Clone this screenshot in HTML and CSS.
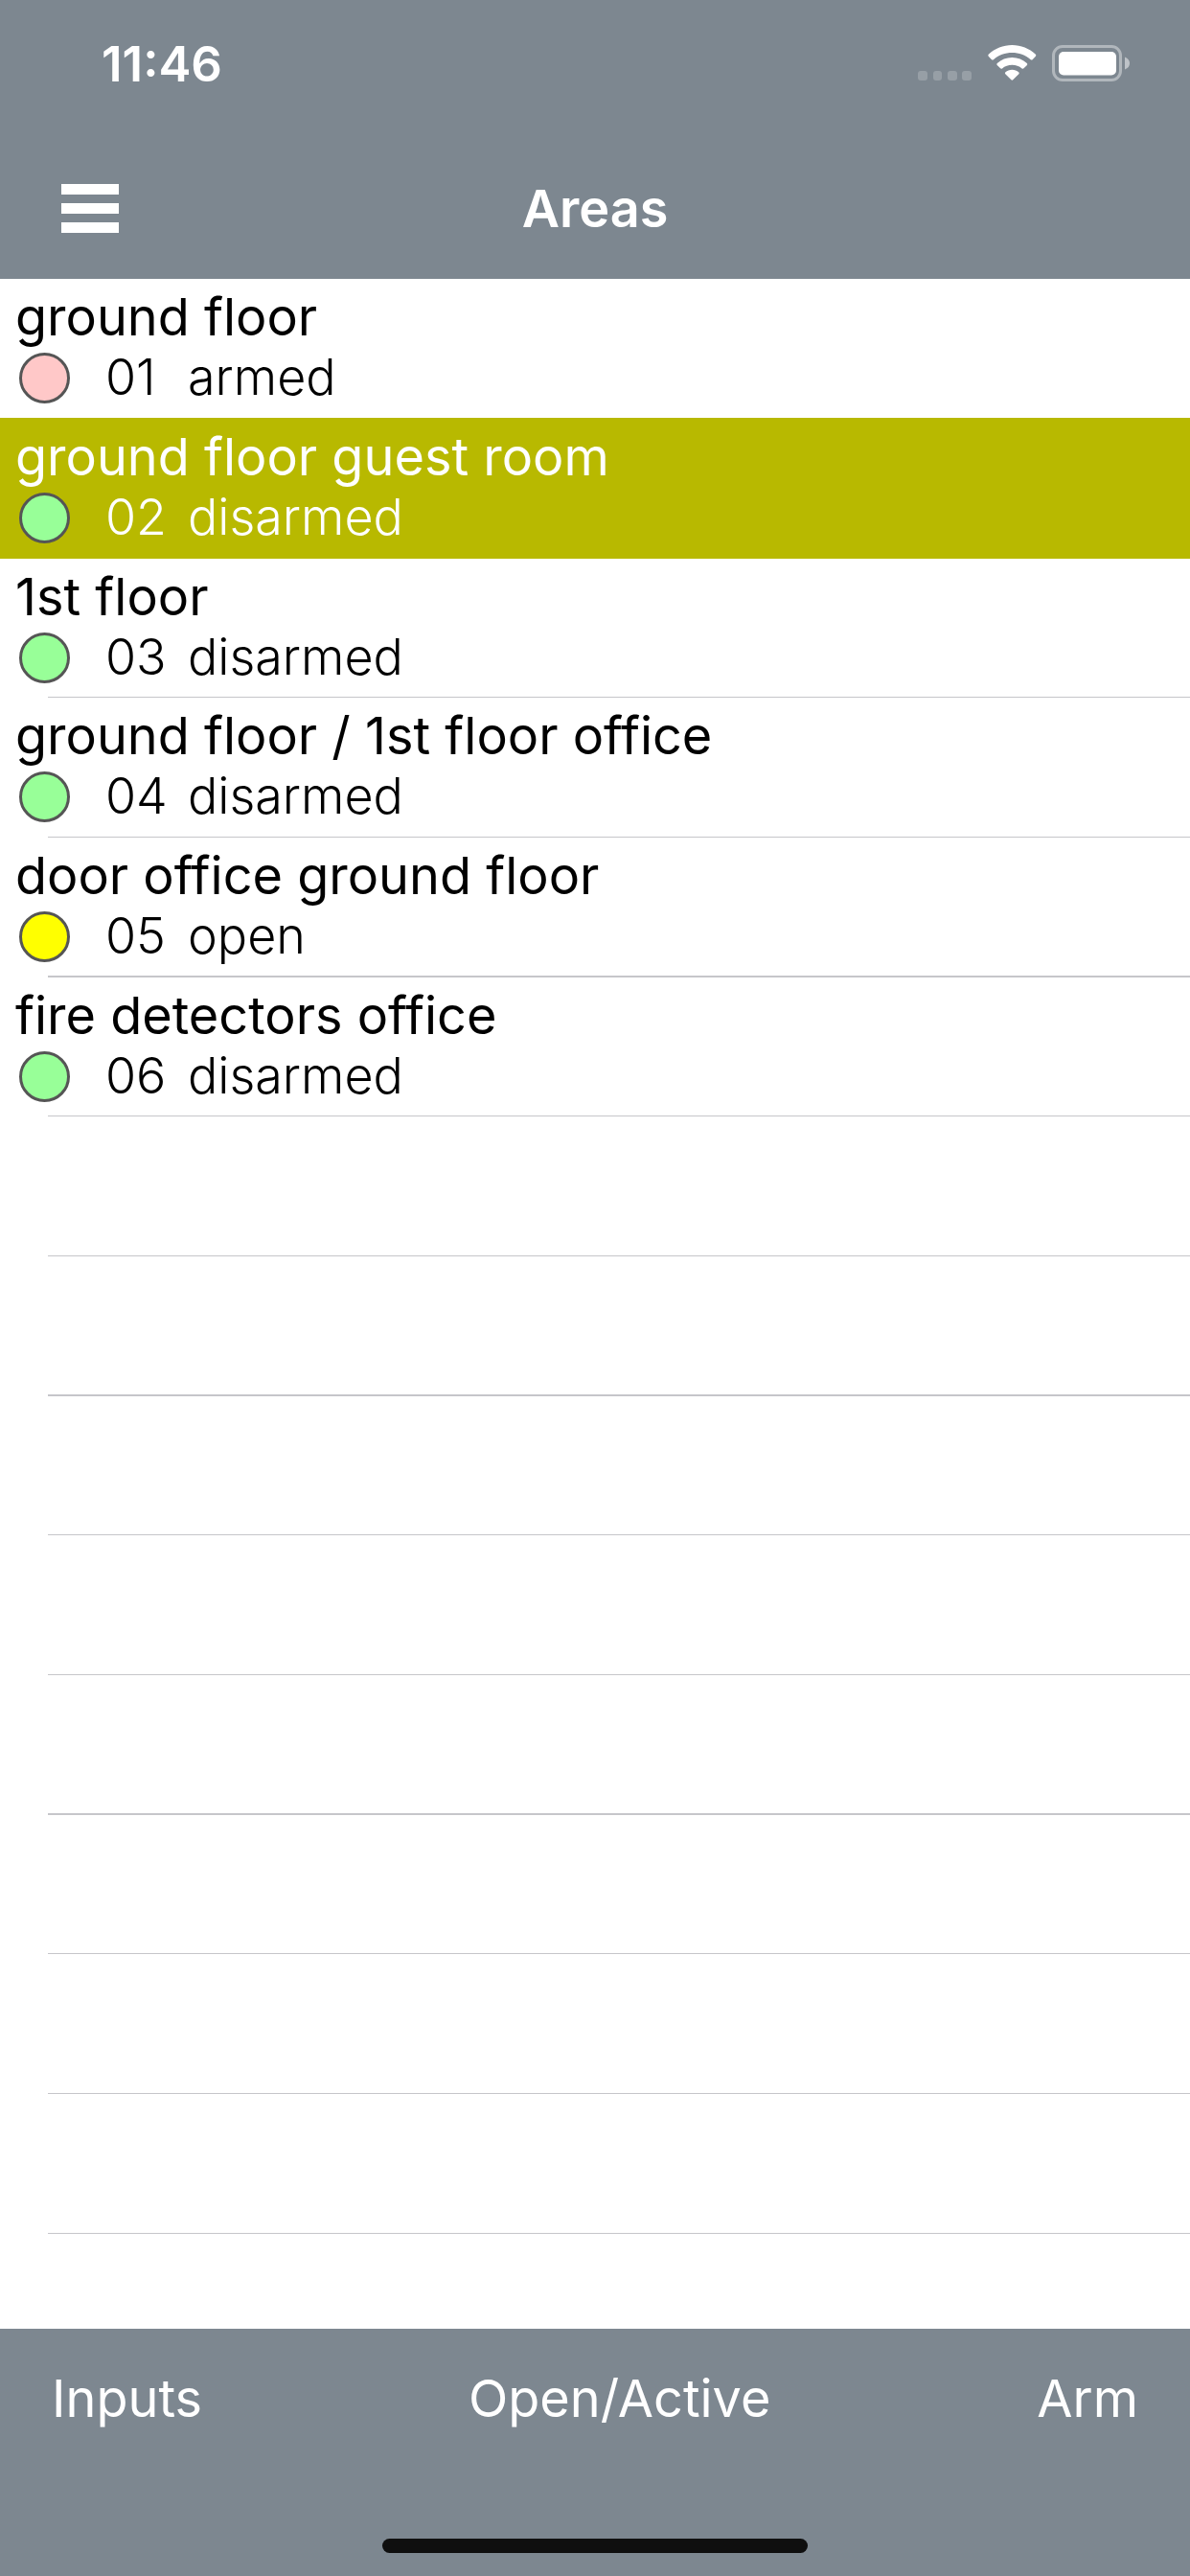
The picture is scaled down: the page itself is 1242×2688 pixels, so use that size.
FILE: index.html
```html
<!DOCTYPE html>
<html lang="en">
<head>
<meta charset="utf-8">
<meta name="viewport" content="width=device-width, initial-scale=1">
<title>Areas</title>
<link rel="stylesheet" href="styles.css">
</head>
<body>
<div class="app">
  <header class="header">
    <div class="status-bar">
      <time class="clock">11:46</time>
      <svg class="status-icons" width="221" height="38" viewBox="0 0 221 38" fill="#fff" aria-hidden="true">
        <g opacity="0.2">
          <rect x="0" y="27" width="10" height="10" rx="3"/>
          <rect x="16" y="27" width="9" height="10" rx="3"/>
          <rect x="31" y="27" width="10" height="10" rx="3"/>
          <rect x="46" y="27" width="10" height="10" rx="3"/>
        </g>
        <path d="M98.300 0C107.500 0 116.200 3.500 122.900 9.800Q123.800 10.800 122.900 11.800L119.600 15.200Q118.700 16 117.700 15.200C112.300 10.500 105.500 8 98.300 8S84.300 10.500 78.900 15.200Q77.900 16 77 15.200L73.700 11.800Q72.800 10.800 73.700 9.800C80.400 3.500 89.100 0 98.300 0Z"/>
        <path d="M98.300 13C104.200 13 109.600 15.200 113.800 18.900Q114.800 19.900 113.900 20.900L110.500 24.300Q109.600 25.200 108.600 24.400C105.800 22.100 102.200 20.800 98.300 20.800S90.800 22.100 88 24.400Q87 25.200 86.100 24.300L82.700 20.900Q81.800 19.900 82.800 18.900C87 15.200 92.400 13 98.300 13Z"/>
        <path d="M98.300 25.800C101 25.800 103.300 26.700 105.200 28.200Q106.200 29.200 105.300 30.200L99.200 36.300Q98.300 37.200 97.400 36.300L91.300 30.200Q90.400 29.200 91.400 28.200C93.300 26.700 95.600 25.800 98.300 25.800Z"/>
        <rect x="141.500" y="1.500" width="70" height="35" rx="9.500" fill="none" stroke="#fff" stroke-width="3" opacity="0.400"/>
        <rect x="147" y="7" width="60" height="24.500" rx="5"/>
        <path d="M216 12.500Q221 14.500 221 19T216 25.500Z" opacity="0.500"/>
      </svg>
    </div>
    <div class="nav-bar">
      <button class="menu" type="button" aria-label="Menu">
        <svg width="60" height="51" viewBox="0 0 60 51" fill="#fff" aria-hidden="true">
          <rect width="60" height="11"/>
          <rect y="20" width="60" height="11"/>
          <rect y="40" width="60" height="11"/>
        </svg>
      </button>
      <h1 class="title">Areas</h1>
    </div>
  </header>

  <main class="content">
    <ul class="areas">
      <li class="row"><button class="area" type="button">
        <span class="name">ground floor</span>
        <span class="detail"><i class="lamp lamp-armed"></i><span class="number">01</span><span>armed</span></span>
      </button></li>
      <li class="row row-selected"><button class="area" type="button" aria-pressed="true">
        <span class="name">ground floor guest room</span>
        <span class="detail"><i class="lamp"></i><span class="number">02</span><span>disarmed</span></span>
      </button></li>
      <li class="row"><button class="area" type="button">
        <span class="name">1st floor</span>
        <span class="detail"><i class="lamp"></i><span class="number">03</span><span>disarmed</span></span>
      </button></li>
      <li class="row"><button class="area" type="button">
        <span class="name">ground floor / 1st floor office</span>
        <span class="detail"><i class="lamp"></i><span class="number">04</span><span>disarmed</span></span>
      </button></li>
      <li class="row"><button class="area" type="button">
        <span class="name">door office ground floor</span>
        <span class="detail"><i class="lamp lamp-open"></i><span class="number">05</span><span>open</span></span>
      </button></li>
      <li class="row"><button class="area" type="button">
        <span class="name">fire detectors office</span>
        <span class="detail"><i class="lamp"></i><span class="number">06</span><span>disarmed</span></span>
      </button></li>
      <li class="row" aria-hidden="true"></li>
      <li class="row" aria-hidden="true"></li>
      <li class="row" aria-hidden="true"></li>
      <li class="row" aria-hidden="true"></li>
      <li class="row" aria-hidden="true"></li>
      <li class="row" aria-hidden="true"></li>
      <li class="row" aria-hidden="true"></li>
      <li class="row" aria-hidden="true"></li>
    </ul>
  </main>

  <footer class="footer">
    <div class="toolbar">
      <button class="tool" type="button">Inputs</button>
      <button class="tool" type="button">Open/Active</button>
      <button class="tool" type="button">Arm</button>
    </div>
    <div class="home-indicator"></div>
  </footer>
</div>
</body>
</html>
```
FILE: styles.css
```css
* {
  box-sizing: border-box;
}

body {
  margin: 0;
  background: #fff;
  color: #000;
  font-family: Inter, "Liberation Sans", sans-serif;
  font-size: 54px;
}

button {
  padding: 0;
  border: 0;
  background: none;
  color: inherit;
  font: inherit;
  text-align: left;
}

.app {
  display: flex;
  flex-direction: column;
  min-height: 100vh;
}

/* Header */

.header {
  background: #7d8790;
  color: #fff;
}

.status-bar {
  display: flex;
  align-items: center;
  justify-content: space-between;
  height: 132px;
  padding: 0 63px 0 106px;
}

.clock {
  font-size: 51px;
  font-weight: 600;
}

.nav-bar {
  display: grid;
  grid-template-columns: 1fr auto 1fr;
  align-items: center;
  height: 159px;
  padding: 12px 64px 0;
}

.menu {
  display: flex;
  justify-self: start;
}

.title {
  margin: 0;
  font-size: 54px;
  font-weight: 600;
}

/* Area list */

.content {
  flex: 1;
}

.areas {
  margin: 0;
  padding: 0;
  list-style: none;
}

.row {
  display: flex;
  flex-direction: column;
  min-height: 146px;
}

.row:nth-child(3n) {
  min-height: 145px;
}

.row::after {
  content: "";
  height: 1px;
  margin: auto 0 0 50px;
  background: #c6c6ca;
}

.row:nth-child(3n + 2):not(:last-child)::after {
  height: 2px;
}

.row:first-child::after,
.row-selected::after {
  visibility: hidden;
}

.row-selected {
  margin-top: -1px;
  padding-top: 1px;
  min-height: 147px;
  background: #b8b900;
  color: #fff;
}

.area {
  display: flex;
  flex-direction: column;
  padding: 8px 16px 0;
}

.name {
  line-height: 64px;
}

.detail {
  display: grid;
  grid-template-columns: 90px 86px 1fr;
  align-items: center;
  padding-left: 4px;
  font-size: 52px;
  font-weight: 300;
  line-height: 62px;
}

.lamp {
  width: 53px;
  height: 53px;
  border: 3px solid #555;
  border-radius: 50%;
  background: #98ff98;
}

.lamp-armed {
  background: #ffc8c8;
}

.lamp-open {
  background: #ff0;
}

/* Footer */

.footer {
  display: flex;
  flex-direction: column;
  align-items: center;
  justify-content: space-between;
  min-height: 258px;
  padding: 40px 54px 24px;
  background: #7d8790;
  color: #fff;
}

.toolbar {
  display: flex;
  justify-content: space-between;
  width: 100%;
}

.tool {
  line-height: 66px;
}

.home-indicator {
  width: 444px;
  max-width: 60%;
  height: 15px;
  border-radius: 8px;
  background: #0f0f0f;
}
```
